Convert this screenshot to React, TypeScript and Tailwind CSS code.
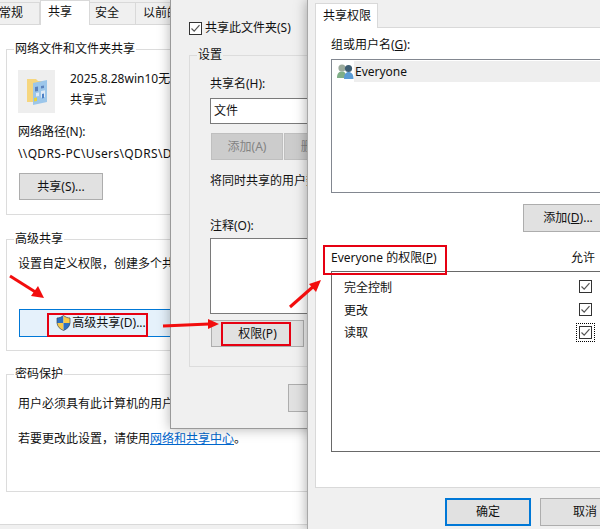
import React from "react";

function Group({ title, height, children }: { title: string; height: string; children: React.ReactNode }) {
  return (
    <fieldset className={`ml-[6px] w-[330px] border border-[#dcdcdc] pl-[11px] ${height}`}>
      <legend className="-ml-[4px] px-px leading-[16px]">{title}</legend>
      {children}
    </fieldset>
  );
}

function Check() {
  return (
    <span className="flex h-[13px] w-[13px] items-center justify-center border border-[#333333] bg-white">
      <svg width="11" height="11" viewBox="0 0 11 11" fill="none">
        <path d="M1.5 5.5 L4.2 8.2 L9.5 2.2" stroke="#555555" strokeWidth="1.2" />
      </svg>
    </span>
  );
}

function FolderIcon() {
  return (
    <div className="flex h-[43px] w-[37px] items-center justify-center bg-[#eeeeee]">
      <svg width="22" height="27" viewBox="0 0 22 27">
        <path d="M1 1 H10 L12 3 H19 V24 H1 Z" fill="#f6d67f" />
        <path d="M7 5 L21 2 V24 L7 27 Z" fill="#9cc6ea" />
        <path d="M9 9 L12 8.4 V13 L9 13.6 Z" fill="#5b82bd" />
        <path d="M15 8 L18 7.4 V10 L15 10.6 Z" fill="#5b82bd" />
        <path d="M10 15 L13 14.4 V18 L10 18.6 Z" fill="#dfeaf5" />
        <path d="M15 13 L19 12.2 V19 L15 19.8 Z" fill="#dfeaf5" />
        <path d="M16 16 L18 15.6 V20 L16 20.4 Z" fill="#4d7fc4" />
        <path d="M8 20 L11 19.5 V23 L8 23.5 Z" fill="#e8d23a" />
      </svg>
    </div>
  );
}

function Shield() {
  return (
    <svg width="15" height="16" viewBox="0 0 15 16" className="shrink-0">
      <path d="M7.5 0.5 L7.5 8 L1 8 V3 C3.5 3 5.5 2 7.5 0.5 Z" fill="#2b6fc2" />
      <path d="M7.5 0.5 C9.5 2 11.5 3 14 3 V8 H7.5 Z" fill="#f7c948" />
      <path d="M1 8 H7.5 V15.5 C4 14 1.5 12 1 8 Z" fill="#f7c948" />
      <path d="M7.5 8 H14 C13.5 12 11 14 7.5 15.5 Z" fill="#2b6fc2" />
      <path d="M7.5 0.5 C5.5 2 3.5 3 1 3 V8 C1.5 12 4 14 7.5 15.5 C11 14 13.5 12 14 8 V3 C11.5 3 9.5 2 7.5 0.5 Z" fill="none" stroke="#3a4a5c" strokeWidth="0.7" />
    </svg>
  );
}

function UsersIcon() {
  return (
    <svg width="17" height="17" viewBox="0 0 17 17" className="shrink-0">
      <circle cx="5" cy="5" r="3.6" fill="#9aaa9c" />
      <path d="M0 15 C0 10 2 8.5 5 8.5 C8 8.5 9 10 9 15 Z" fill="#7fae87" />
      <circle cx="11.5" cy="5.5" r="3.6" fill="#3f5f74" />
      <path d="M7 16 C7 11 9 9 11.5 9 C14.5 9 16.5 11 16.5 16 Z" fill="#5a9bd5" />
    </svg>
  );
}

export default function App() {
  const btn = "flex shrink-0 items-center justify-center border border-[#adadad] bg-[#e1e1e1]";
  return (
    <div className="relative h-[529px] w-[600px] overflow-hidden bg-[#f0f0f0] font-['Noto_Sans','Noto_Sans_CJK_SC',sans-serif] text-[12px] leading-[16px] text-[#111111]">
      {/* properties window */}
      <div className="absolute top-0 left-0 h-[529px] w-[340px]">
        <div className="flex h-[24px] items-end">
          <div className="flex h-[22px] w-[40px] justify-end border-t border-r border-[#d9d9d9] pt-[2px] pr-[16px] whitespace-nowrap">常规</div>
          <div className="relative z-10 -mb-px h-[25px] w-[50px] border-x border-t border-[#d9d9d9] bg-white pt-[3px] pl-[7px]">共享</div>
          <div className="flex h-[22px] w-[46px] border-t border-r border-[#d9d9d9] pt-[2px] pl-[5px]">安全</div>
          <div className="flex h-[22px] w-[60px] border-t border-r border-[#d9d9d9] pt-[2px] pl-[7px] whitespace-nowrap">以前的版本</div>
        </div>
        <div className="h-[501px] overflow-hidden border-t border-b border-[#d9d9d9] bg-white pt-[16px]">
          <Group title="网络文件和文件夹共享" height="h-[174px]">
            <div className="mt-[13px] flex">
              <FolderIcon />
              <div className="ml-[15px] pt-px">
                <div className="whitespace-nowrap">2025.8.28win10无线网卡驱动</div>
                <div className="mt-[5px]">共享式</div>
              </div>
            </div>
            <div className="mt-[11px]">网络路径(N):</div>
            <div className="mt-[6px] tracking-[0.35px] whitespace-nowrap">\\QDRS-PC\Users\QDRS\Desktop</div>
            <div className={`mt-[11px] ml-px h-[27px] w-[84px] ${btn}`}>共享(S)...</div>
          </Group>
          <div className="mt-[16px]">
            <Group title="高级共享" height="h-[120px]">
              <div className="mt-[9px] whitespace-nowrap">设置自定义权限，创建多个共享，并设置其他高级共享选项。</div>
              <div className="relative mt-[37px] ml-px flex h-[28px] w-[164px] items-center justify-center gap-px border border-[#0078d7] bg-[#e5f1fb]">
                <Shield />
                <span>高级共享(D)...</span>
                <div className="absolute top-[3px] left-[27px] h-[24px] w-[101px] border-[2px] border-[#e60012]" />
              </div>
            </Group>
          </div>
          <div className="mt-[15px]">
            <Group title="密码保护" height="h-[126px]">
              <div className="mt-[14px] whitespace-nowrap">用户必须具有此计算机的用户帐户和密码，才能访问共享文件夹。</div>
              <div className="mt-[19px] whitespace-nowrap">
                若要更改此设置，请使用<span className="text-[#0066cc] underline">网络和共享中心</span>。
              </div>
            </Group>
          </div>
        </div>
      </div>

      {/* advanced sharing window */}
      <div className="absolute top-0 left-[170px] h-[429px] w-[170px] border-b border-l border-[#9a9a9a] bg-[#f0f0f0] pt-[20px] pl-[18px] shadow-[0_0_12px_rgba(0,0,0,0.3)]">
        <div className="flex items-center gap-[3px] whitespace-nowrap">
          <Check />
          <span>共享此文件夹(S)</span>
        </div>
        <fieldset className="mt-[11px] h-[320px] w-[200px] border border-[#dcdcdc] pl-[20px]">
          <legend className="-ml-[13px] px-px leading-[16px]">设置</legend>
          <div className="mt-[13px]">共享名(H):</div>
          <div className="mt-[6px] flex h-[26px] w-[160px] items-center border border-[#7a7a7a] bg-white pl-[3px]">文件</div>
          <div className="mt-[9px] ml-px flex gap-px text-[#838383]">
            <div className="flex h-[27px] w-[72px] items-center justify-center border border-[#bfbfbf] bg-[#cccccc]">添加(A)</div>
            <div className="flex h-[27px] w-[72px] items-center justify-center border border-[#bfbfbf] bg-[#cccccc]">删除(R)</div>
          </div>
          <div className="mt-[13px] whitespace-nowrap">将同时共享的用户数量限制为</div>
          <div className="mt-[29px]">注释(O):</div>
          <div className="mt-[4px] h-[76px] w-[160px] border border-[#7a7a7a] bg-white" />
          <div className={`relative mt-[6px] ml-px h-[27px] w-[93px] ${btn}`}>
            权限(P)
            <div className="absolute top-px left-[9px] h-[24px] w-[70px] border-[2px] border-[#e60012]" />
          </div>
        </fieldset>
        <div className={`mt-[17px] ml-[99px] h-[28px] w-[80px] ${btn}`} />
      </div>

      {/* permissions window */}
      <div className="absolute top-0 left-[307px] h-[529px] w-[320px] border-l border-[#a8a8a8] bg-[#f0f0f0] pt-[3px] pl-[7px] shadow-[0_0_12px_rgba(0,0,0,0.35)]">
        <div className="relative z-10 -mb-px h-[25px] w-[63px] border-x border-t border-[#d9d9d9] bg-white pt-[4px] pl-[7px]">共享权限</div>
        <div className="relative h-[461px] w-[300px] border border-[#d9d9d9] bg-white pt-[9px] pl-[15px]">
          <div>组或用户名(<u>G</u>):</div>
          <div className="mt-[6px] h-[134px] w-[280px] border border-[#828790] pt-px">
            <div className="flex items-center pl-[5px]">
              <UsersIcon />
              <div className="h-[21px] w-full bg-[#eeeeee] pt-[3px] pl-px">Everyone</div>
            </div>
          </div>
          <div className={`mt-[11px] ml-[192px] h-[28px] w-[90px] ${btn}`}>
            <span>添加(<u>D</u>)...</span>
          </div>
          <div className="mt-[18px] flex w-[264px] justify-between">
            <span>Everyone 的权限(<u>P</u>)</span>
            <span>允许</span>
          </div>
          <div className="absolute top-[217px] left-[7px] h-[30px] w-[124px] border-[2px] border-[#e60012]" />
          <div className="mt-[5px] h-[181px] w-[280px] border border-[#696969] pt-[8px]">
            {["完全控制", "更改", "读取"].map((name, i) => (
              <div key={name} className="flex h-[23px] w-[260px] items-start justify-between pl-[12px]">
                <span className={i === 2 ? "-mt-px" : ""}>{name}</span>
                <span className={i === 2 ? "-m-[3px] border border-dotted border-black p-[2px]" : ""}>
                  <Check />
                </span>
              </div>
            ))}
          </div>
        </div>
        <div className="mt-[10px] ml-[130px] flex gap-[9px]">
          <div className="flex h-[28px] w-[86px] shrink-0 items-center justify-center border-[2px] border-[#0078d7] bg-[#e1e1e1]">确定</div>
          <div className={`h-[28px] w-[90px] ${btn}`}>取消</div>
        </div>
      </div>

      {/* red annotation arrows */}
      <svg className="pointer-events-none absolute inset-0 z-20" width="600" height="529" viewBox="0 0 600 529">
        <path d="M10 276 L37 293" stroke="#f20d0d" strokeWidth="3" />
        <path d="M44 298 L31 296 L38 286 Z" fill="#f20d0d" />
        <path d="M163 326 L209 324" stroke="#f20d0d" strokeWidth="3" />
        <path d="M219 324 L208 319 L208 329 Z" fill="#f20d0d" />
        <path d="M290 307 L315 285" stroke="#f20d0d" strokeWidth="3" />
        <path d="M321 280 L309 284 L316 292 Z" fill="#f20d0d" />
      </svg>
    </div>
  );
}
